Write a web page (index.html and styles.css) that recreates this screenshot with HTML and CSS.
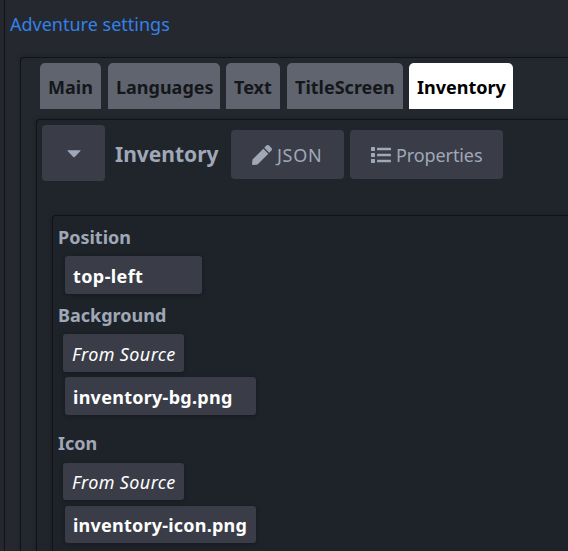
FILE: index.html
```
<!DOCTYPE html>
<html lang="en">
<head>
<meta charset="utf-8">
<title>Adventure settings</title>
<link rel="stylesheet" href="styles.css">
</head>
<body>
<main class="page">
  <a class="page-title">Adventure settings</a>
  <section class="panel outer">
    <nav class="tabs">
      <a class="tab main"><span>Main</span></a>
      <a class="tab languages"><span>Languages</span></a>
      <a class="tab text"><span>Text</span></a>
      <a class="tab titlescreen"><span>TitleScreen</span></a>
      <a class="tab inventory active"><span>Inventory</span></a>
    </nav>
    <section class="panel editor">
      <header class="toolbar">
        <button class="btn toggle"><svg width="14" height="8" viewBox="0 0 14 8"><path d="M.8.3h12.4q.8.1.2.8L7.7 7q-.7.6-1.4 0L.6 1.1Q0 .4.8.3z"/></svg></button>
        <h2>Inventory</h2>
        <button class="btn json"><svg width="20" height="20" viewBox="0 0 512 512"><path d="M290.7 93.2l128 128-278 278-114.200 12.600C11.200 513.500-1.600 500.600.1 485.300l12.700-114.200L290.700 93.200zm207.200-19.100l-60.100-60.100c-18.800-18.800-49.200-18.800-67.900 0l-56.600 56.600 128 128 56.600-56.600c18.800-18.800 18.800-49.200 0-67.900z"/></svg><span>JSON</span></button>
        <button class="btn properties"><svg width="20" height="16" viewBox="0 0 20 16"><rect width="4" height="4" rx=".5"/><rect y="6" width="4" height="4" rx=".5"/><rect y="12" width="4" height="4" rx=".5"/><rect x="6" y=".8" width="14" height="2.500" rx=".5"/><rect x="6" y="6.800" width="14" height="2.500" rx=".5"/><rect x="6" y="12.800" width="14" height="2.500" rx=".5"/></svg><span>Properties</span></button>
      </header>
      <section class="panel fields">
        <div class="label">Position</div>
        <div class="value short"><span class="t-position">top-left</span></div>
        <div class="label">Background</div>
        <div class="source"><span>From Source</span></div>
        <div class="value"><span class="t-bg">inventory-bg.png</span></div>
        <div class="label icon">Icon</div>
        <div class="source small"><span>From Source</span></div>
        <div class="value small"><span class="t-icon">inventory-icon.png</span></div>
      </section>
    </section>
  </section>
</main>
</body>
</html>
```
FILE: styles.css
```
* { box-sizing: border-box; }
html, body { margin: 0; height: 100%; overflow: hidden; }
body {
  background: #24272e;
  color: #a0a8b8;
  font: 18px/24px "Noto Sans", "Open Sans", sans-serif;
}
span { white-space: nowrap; }
.page {
  display: flex;
  flex-direction: column;
  height: 100%;
  margin-left: 4px;
  border-left: 1px solid #111317;
  padding: 12px 0 0 5px;
  background: #25282f;
}
.page-title { display: block; height: 45px; color: #3481e8; }
.panel {
  display: flex;
  flex-direction: column;
  flex: 1;
  min-height: 0;
  border: 1px solid #111317;
  border-width: 1px 0 0 1px;
  border-radius: 4px 0 0 0;
  box-shadow: 0 0 5px rgba(0, 0, 0, .23);
}
.outer { margin-left: 10px; padding: 5px 0 0 15px; background: #23272e; }
.tabs { display: flex; flex: none; height: 46px; margin-left: 4px; }
.tab {
  display: flex;
  align-items: center;
  padding: 2px 0 0 8px;
  border-radius: 5px 5px 0 0;
  background: #5f646f;
  color: #15171b;
  font-weight: 700;
}
.main { width: 61px; margin-right: 7px; }
.languages { width: 112px; margin-right: 6px; }
.text { width: 54px; margin-right: 7px; }
.titlescreen { width: 116px; margin-right: 6px; }
.inventory { width: 104px; }
.tab.active { background: #fff; color: #000; }
.editor { margin-top: 10px; padding: 5px 0 0 15px; background: #20252b; }
.toolbar { display: flex; flex: none; height: 56px; margin: 0 0 34px -10px; align-items: flex-start; }
.btn {
  display: flex;
  align-items: center;
  border: 0;
  padding: 0;
  border-radius: 4px;
  background: #3a3d47;
  color: #a0a8b8;
  font: inherit;
}
.btn svg { fill: #a0a8b8; flex: none; }
.toggle { width: 63px; height: 56px; padding: 2px 0 0 25px; }
h2 { width: 116px; margin: 15px 0 0 10px; font-size: 21px; line-height: 28px; font-weight: 700; white-space: nowrap; }
.json { width: 113px; height: 49px; margin: 5px 6px 0 0; padding-left: 21px; gap: 5px; }
.json span { letter-spacing: .7px; }
.properties { width: 153px; height: 49px; margin-top: 5px; padding-left: 21px; gap: 5px; }
.properties span { letter-spacing: -.1px; }
.fields { padding: 9px 0 0 5px; background: #1e2329; }
.label { flex: none; height: 25px; font-weight: 700; }
.value, .source {
  display: flex;
  flex: none;
  align-items: center;
  border-radius: 3px;
  background: #3a3d47;
  color: #fff;
  box-shadow: 0 1px 5px rgba(0, 0, 0, .28);
}
.value { width: 191px; height: 38px; margin-left: 7px; padding: 2px 0 0 8px; font-weight: 700; }
.short { width: 137px; margin-top: 6px; margin-bottom: 9px; }
.t-position { letter-spacing: .4px; }
.t-bg { letter-spacing: .27px; }
.t-icon { letter-spacing: .22px; }
.source { width: 121px; height: 38px; margin: 6px 0 5px 5px; padding: 1px 0 0 9px; font-style: italic; letter-spacing: .38px; }
.label.icon { height: 26px; margin-top: 16px; }
.source.small { height: 37px; margin-bottom: 6px; }
.value.small { height: 37px; padding-top: 0; }
```
